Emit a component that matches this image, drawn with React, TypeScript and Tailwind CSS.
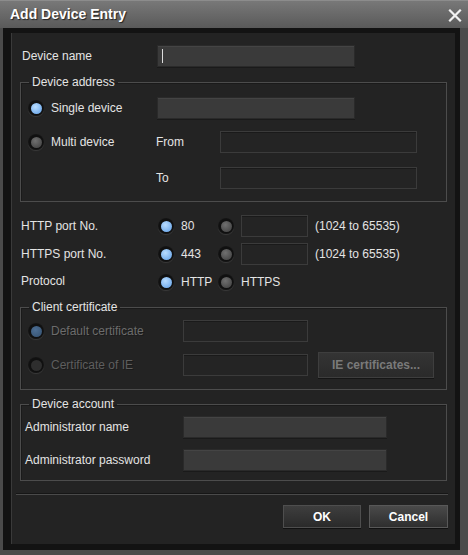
import React from 'react';

const Radio = ({ on = false, disabled = false }: { on?: boolean; disabled?: boolean }) => {
  let dot = 'bg-[radial-gradient(circle_at_40%_35%,#707070,#3c3c3c)]';
  if (on && !disabled) dot = 'bg-[radial-gradient(circle_at_40%_35%,#b8dcff,#5e9ee6)]';
  if (on && disabled) dot = 'bg-[radial-gradient(circle_at_40%_35%,#4c6e94,#34506e)]';
  if (!on && disabled) dot = 'bg-[#2e2e2e]';
  return (
    <span className="w-[16px] h-[16px] shrink-0 rounded-full bg-[radial-gradient(circle,#101010_60%,#262626)] shadow-[0_1px_1px_#3a3a3a] flex items-center justify-center">
      <span className={`w-[11px] h-[11px] rounded-full ${dot}`} />
    </span>
  );
};

const Field = ({ w, filled = false, cursor = false }: { w: string; filled?: boolean; cursor?: boolean }) => (
  <div
    className={`${w} h-[22px] shrink-0 flex items-center ${
      filled
        ? 'bg-[#3a3a3a] border border-[#2a2a2a] shadow-[inset_0_1px_0_#444,0_1px_0_#1a1a1a]'
        : 'bg-[#242424] border border-[#3b3b3b] shadow-[inset_0_1px_0_#1a1a1a]'
    }`}
  >
    {cursor && <span className="ml-[4px] w-px h-[14px] bg-[#dcdcdc]" />}
  </div>
);

const Group = ({ title, className = '', children }: { title: string; className?: string; children: React.ReactNode }) => (
  <fieldset className={`ml-[8px] w-[427px] border border-[#4c4c4c] shadow-[inset_1px_1px_0_#1a1a1a] ${className}`}>
    <legend className="ml-[8px] px-[3px] h-[14px] leading-[14px]">{title}</legend>
    {children}
  </fieldset>
);

export default function App() {
  return (
    <div className="w-[468px] h-[555px] flex flex-col bg-[#4b4b4b] font-['Liberation_Sans',Arial,sans-serif] text-[12px] text-[#e4e4e4] overflow-hidden">
      <div className="h-[28px] shrink-0 flex items-center justify-between pl-[10px] pr-[6px] bg-gradient-to-b from-[#787878] to-[#5a5a5a] border-t border-[#8c8c8c]">
        <span className="text-[14px] font-bold text-white [text-shadow:1px_1px_1px_#222]">Add Device Entry</span>
        <svg width="14" height="13" viewBox="0 0 14 13" className="mt-[1px]">
          <path d="M2 1.5 L12 11.5 M12 1.5 L2 11.5" stroke="#f0f0f0" strokeWidth="2.2" strokeLinecap="square" />
        </svg>
      </div>
      <div className="flex-1 flex pl-[3px] pr-[8px] pb-[5px]">
        <div className="flex-1 flex bg-[#131313] pl-[8px] pt-[5px] pr-[5px] pb-[6px]">
          <div className="flex-1 flex flex-col bg-[#232323] border-l border-[#3a3a3a] pt-[12px]">
            {/* Device name */}
            <div className="flex items-center h-[22px] pl-[10px]">
              <span className="w-[135px]">Device name</span>
              <Field w="w-[198px]" filled cursor />
            </div>

            <Group title="Device address" className="mt-[8px] pb-[12px]">
              <div className="flex items-center h-[22px] mt-[8px] pl-[7px]">
                <div className="w-[129px] flex items-center gap-[7px]">
                  <Radio on />
                  <span>Single device</span>
                </div>
                <Field w="w-[198px]" filled />
              </div>
              <div className="flex items-center h-[22px] mt-[12px] pl-[7px]">
                <div className="w-[128px] flex items-center gap-[7px]">
                  <Radio />
                  <span>Multi device</span>
                </div>
                <span className="w-[64px]">From</span>
                <Field w="w-[197px]" />
              </div>
              <div className="flex items-center h-[22px] mt-[14px] pl-[135px]">
                <span className="w-[64px]">To</span>
                <Field w="w-[197px]" />
              </div>
            </Group>

            {/* Ports */}
            <div className="flex items-center h-[22px] mt-[13px] pl-[9px]">
              <span className="w-[137px]">HTTP port No.</span>
              <div className="w-[60px] flex items-center gap-[7px]">
                <Radio on />
                <span>80</span>
              </div>
              <Radio />
              <span className="w-[7px]" />
              <Field w="w-[67px]" />
              <span className="ml-[7px]">(1024 to 65535)</span>
            </div>
            <div className="flex items-center h-[22px] mt-[6px] pl-[9px]">
              <span className="w-[137px]">HTTPS port No.</span>
              <div className="w-[60px] flex items-center gap-[7px]">
                <Radio on />
                <span>443</span>
              </div>
              <Radio />
              <span className="w-[7px]" />
              <Field w="w-[67px]" />
              <span className="ml-[7px]">(1024 to 65535)</span>
            </div>
            <div className="flex items-center h-[22px] mt-[6px] pl-[9px]">
              <span className="w-[137px] -mt-[2px]">Protocol</span>
              <div className="w-[60px] flex items-center gap-[7px]">
                <Radio on />
                <span>HTTP</span>
              </div>
              <div className="flex items-center gap-[7px]">
                <Radio />
                <span>HTTPS</span>
              </div>
            </div>

            <Group title="Client certificate" className="mt-[7px] pb-[11px]">
              <div className="flex items-center h-[22px] mt-[6px] pl-[7px]">
                <div className="w-[155px] flex items-center gap-[7px]">
                  <Radio on disabled />
                  <span className="text-[#6c6c6c] [text-shadow:1px_1px_0_#1a1a1a]">Default certificate</span>
                </div>
                <Field w="w-[125px]" />
              </div>
              <div className="flex items-center h-[26px] mt-[10px] pl-[7px]">
                <div className="w-[155px] flex items-center gap-[7px]">
                  <Radio disabled />
                  <span className="text-[#5e5e5e] [text-shadow:1px_1px_0_#1a1a1a]">Certificate of IE</span>
                </div>
                <Field w="w-[125px]" />
                <div className="ml-[10px] w-[116px] h-[26px] flex items-center justify-center bg-gradient-to-b from-[#343434] to-[#2a2a2a] border border-[#3e3e3e] shadow-[0_1px_0_#151515] font-bold text-[#7a7a7a]">
                  IE certificates...
                </div>
              </div>
            </Group>

            <Group title="Device account" className="mt-[7px] pb-[9px]">
              <div className="flex items-center h-[22px] mt-[5px] pl-[4px]">
                <span className="w-[158px]">Administrator name</span>
                <Field w="w-[204px]" filled />
              </div>
              <div className="flex items-center h-[22px] mt-[11px] pl-[4px]">
                <span className="w-[158px]">Administrator password</span>
                <Field w="w-[204px]" filled />
              </div>
            </Group>

            <div className="ml-[4px] w-[432px] mt-[13px] border-t border-[#4a4a4a] shadow-[0_-1px_0_#161616]" />

            <div className="flex justify-end gap-[8px] mt-[10px] pr-[7px]">
              <div className="w-[78px] h-[23px] flex items-center justify-center bg-gradient-to-b from-[#3e3e3e] to-[#2a2a2a] border border-[#4e4e4e] shadow-[0_1px_0_#111] font-bold text-white">
                OK
              </div>
              <div className="w-[79px] h-[23px] flex items-center justify-center bg-gradient-to-b from-[#4a4a4a] to-[#2e2e2e] border border-[#585858] shadow-[0_1px_0_#111] font-bold text-white">
                Cancel
              </div>
            </div>
          </div>
        </div>
      </div>
    </div>
  );
}
